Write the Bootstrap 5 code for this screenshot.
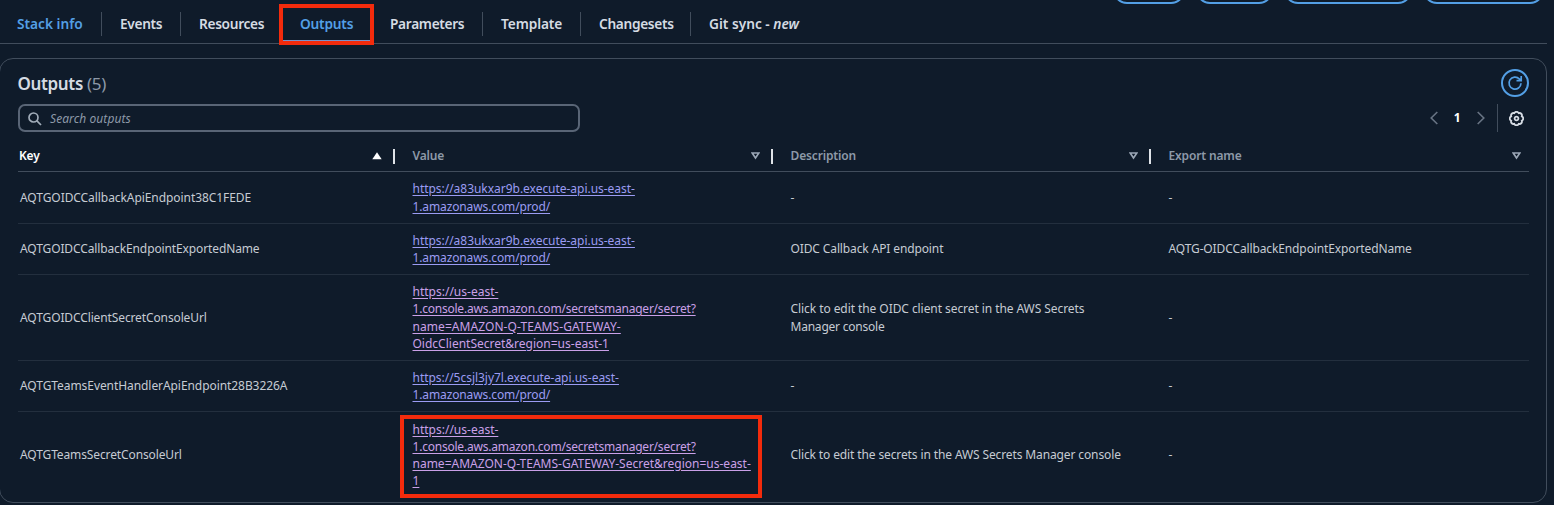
<!DOCTYPE html>
<html lang="en" data-bs-theme="dark">
<head>
<meta charset="utf-8">
<meta name="viewport" content="width=device-width, initial-scale=1">
<title>Outputs</title>
<link href="https://cdn.jsdelivr.net/npm/bootstrap@5.3.0/dist/css/bootstrap.min.css" rel="stylesheet">
<style>
:root{--page:#0f1b2a;--line:#414d5c;--accent:#539fe5;--txt:#c6cbd3;--red:#f32b0c}
body{background:var(--page);color:var(--txt);font-family:"Noto Sans","Open Sans",sans-serif;font-size:12px;line-height:17.15px;width:1554px;height:505px;overflow:hidden}
.stage{width:1547px;height:505px}
.actions{right:3px;top:-24px;gap:11px}
.actions .btn{height:28px;border:2px solid var(--accent);border-radius:14px;padding:0}
.tabs{height:44px;border-bottom:1px solid var(--line)}
.tabs .nav-link{padding:0 0 0 18px;color:#d5dbe3;font-weight:600;font-size:13.7px;letter-spacing:-.32px;line-height:24px;height:24px;margin-top:12px;border-left:1px solid var(--line);white-space:nowrap}
.tabs .nav-item:first-child .nav-link{padding-left:17px;border-left:0;letter-spacing:0}
.tabs .nav-link.active,.tabs .hot{color:var(--accent)}
.tabs .nav-link.active{padding-left:19px;letter-spacing:-.2px}
.mark-tab{left:-1px;top:4px;width:95px;height:41px;border:4px solid var(--red)}
.mark-tab::after{content:"";display:block;height:1px;background:#7b91c8;margin-top:32px}
.panel{margin-top:14px;margin-left:-1px;width:1548px;height:445px;border:1px solid var(--line);border-radius:14px;padding:9px 17px 0 17.5px}
.panel h2{font-size:17px;font-weight:600;line-height:32px;letter-spacing:-.35px;color:#d5dbe3}
.panel h2 span{font-weight:400;color:#8d99a8}
.reload{width:28px;height:28px;border:2px solid var(--accent);color:var(--accent);border-radius:50%;margin-top:1px}
.search{width:562.5px;height:28px;border:2px solid #596576;border-radius:7px;padding:1px 9px 0 8px;color:#8d99a8;font-style:italic}
.ph{margin-left:8.5px;letter-spacing:.08px}
.tools{height:28px}
.pg{width:39.5px}
.divider{width:1px;height:28px;background:var(--line);margin:0 11px 0 12px}
.gear{margin-right:5px}
.outputs{table-layout:fixed;width:1511px;margin-top:9px;border-collapse:separate;border-spacing:0}
.outputs th{height:31px;padding:0 0 0 18px;font-weight:600;letter-spacing:-.15px;color:#8d99a8;border-bottom:1px solid var(--line)}
.outputs td{padding:0 8px 0 18px;border-bottom:1px solid #232f3e;vertical-align:middle;letter-spacing:-.12px}
.outputs th:first-child{padding-left:1.5px}
.outputs td:first-child{padding-left:2.5px}
.outputs tr:last-child td{border-bottom:0}
.head-in{height:15px;padding-right:11px;border-right:2px solid #dfe3e8}
.outputs th:last-child .head-in{border:0;padding-right:8px}
.outputs a{color:#9b9bf3;text-underline-offset:1.5px;letter-spacing:-.03px;white-space:nowrap}
.outputs a.seen{color:#caa0e8;letter-spacing:0}
.outputs .tight{letter-spacing:-.22px}
.outputs .snug{letter-spacing:-.07px}
.outputs .wide{letter-spacing:.06px}
.mark-cell{left:5.5px;top:3px;width:362px;height:83px;border:4px solid var(--red)}
</style>
</head>
<body>
<div class="stage position-relative">
  <div class="actions position-absolute d-flex">
    <span class="btn" style="width:72px"></span><span class="btn" style="width:77px"></span><span class="btn" style="width:128px"></span><span class="btn" style="width:121px"></span>
  </div>
  <ul class="tabs nav flex-nowrap">
    <li class="nav-item" style="width:101px"><a class="nav-link hot">Stack info</a></li>
    <li class="nav-item" style="width:79px"><a class="nav-link">Events</a></li>
    <li class="nav-item" style="width:100px"><a class="nav-link">Resources</a></li>
    <li class="nav-item position-relative" style="width:91px"><a class="nav-link active">Outputs</a><span class="mark-tab position-absolute"></span></li>
    <li class="nav-item" style="width:111px"><a class="nav-link">Parameters</a></li>
    <li class="nav-item" style="width:98px"><a class="nav-link" style="letter-spacing:-.1px">Template</a></li>
    <li class="nav-item" style="width:110px"><a class="nav-link">Changesets</a></li>
    <li class="nav-item"><a class="nav-link" style="letter-spacing:0">Git sync - <i>new</i></a></li>
  </ul>
  <section class="panel">
    <div class="d-flex justify-content-between" style="height:36px">
      <h2 class="m-0">Outputs <span>(5)</span></h2>
      <span class="reload d-flex align-items-center justify-content-center">
        <svg width="16" height="16" viewBox="0 0 16 16" fill="none" stroke="currentColor" stroke-width="1.7"><path d="M14 8.3A6 6 0 1 1 12.4 4L14 5.4M14.2 1v4.7H9.5"/></svg>
      </span>
    </div>
    <div class="d-flex justify-content-between">
      <div class="search d-flex align-items-center">
        <svg width="14" height="14" viewBox="0 0 14 14" fill="none" stroke="#a2adba" stroke-width="1.7"><circle cx="5.5" cy="5.5" r="4.5"/><path d="M8.7 8.7 13 13"/></svg>
        <span class="ph">Search outputs</span>
      </div>
      <div class="tools d-flex align-items-center">
        <svg width="8" height="14" viewBox="0 0 8 14" fill="none" stroke="#687484" stroke-width="1.6"><path d="M7.3 1 1.2 7l6.1 6"/></svg>
        <b class="pg text-white text-center">1</b>
        <svg width="8" height="14" viewBox="0 0 8 14" fill="none" stroke="#687484" stroke-width="1.6"><path d="M.7 1l6.1 6-6.1 6"/></svg>
        <span class="divider"></span>
        <svg class="gear" width="15" height="15" viewBox="-7.5 -7.5 15 15" fill="none" stroke="#d5dbe3" stroke-width="1.8"><path d="M-2.2-5.3A2.4 2.4 0 0 1 2.2-5.3A2.4 2.4 0 0 1 5.3-2.2A2.4 2.4 0 0 1 5.3 2.2A2.4 2.4 0 0 1 2.2 5.3A2.4 2.4 0 0 1-2.2 5.3A2.4 2.4 0 0 1-5.3 2.2A2.4 2.4 0 0 1-5.3-2.2A2.4 2.4 0 0 1-2.2-5.3Z"/><circle r="1.9"/></svg>
      </div>
    </div>
    <table class="outputs">
      <colgroup><col style="width:377px"><col style="width:378px"><col style="width:378px"><col style="width:378px"></colgroup>
      <thead><tr>
        <th class="text-white"><div class="head-in d-flex align-items-center justify-content-between"><span>Key</span><svg width="10" height="8"><path fill="#fff" d="M5 .3 9.7 7.3H.3z"/></svg></div></th>
        <th><div class="head-in d-flex align-items-center justify-content-between"><span>Value</span><svg width="9" height="8" fill="none" stroke="#9ba7b6" stroke-width="1.6"><path d="M1.2 1h6.6L4.5 6z"/></svg></div></th>
        <th><div class="head-in d-flex align-items-center justify-content-between"><span>Description</span><svg width="9" height="8" fill="none" stroke="#9ba7b6" stroke-width="1.6"><path d="M1.2 1h6.6L4.5 6z"/></svg></div></th>
        <th><div class="head-in d-flex align-items-center justify-content-between"><span>Export name</span><svg width="9" height="8" fill="none" stroke="#9ba7b6" stroke-width="1.6"><path d="M1.2 1h6.6L4.5 6z"/></svg></div></th>
      </tr></thead>
      <tbody>
        <tr style="height:52px"><td class="snug">AQTGOIDCCallbackApiEndpoint38C1FEDE</td><td><a href="#">https://a83ukxar9b.execute-api.us-east-<br><span style="letter-spacing:-.12px">1.amazonaws.com/prod/</span></a></td><td>-</td><td>-</td></tr>
        <tr style="height:51px"><td>AQTGOIDCCallbackEndpointExportedName</td><td><a href="#">https://a83ukxar9b.execute-api.us-east-<br><span style="letter-spacing:-.12px">1.amazonaws.com/prod/</span></a></td><td>OIDC Callback API endpoint</td><td>AQTG-OIDCCallbackEndpointExportedName</td></tr>
        <tr style="height:86px"><td>AQTGOIDCClientSecretConsoleUrl</td><td><a class="seen" href="#">https://us-east-<br><span class="tight">1.console.aws.amazon.com/secretsmanager/secret?</span><br><span class="wide">name=AMAZON-Q-TEAMS-GATEWAY-</span><br>OidcClientSecret&amp;region=us-east-1</a></td><td class="snug">Click to edit the OIDC client secret in the AWS Secrets<br><span class="tight">Manager console</span></td><td>-</td></tr>
        <tr style="height:51px"><td class="snug">AQTGTeamsEventHandlerApiEndpoint28B3226A</td><td><a href="#">https://5csjl3jy7l.execute-api.us-east-<br><span style="letter-spacing:-.12px">1.amazonaws.com/prod/</span></a></td><td>-</td><td>-</td></tr>
        <tr style="height:86px"><td>AQTGTeamsSecretConsoleUrl</td><td class="position-relative"><a class="seen" href="#">https://us-east-<br><span class="tight">1.console.aws.amazon.com/secretsmanager/secret?</span><br>name=AMAZON-Q-TEAMS-GATEWAY-Secret&amp;region=us-east-<br>1</a><span class="mark-cell position-absolute"></span></td><td>Click to edit the secrets in the AWS Secrets Manager console</td><td>-</td></tr>
      </tbody>
    </table>
  </section>
</div>
<script src="https://cdn.jsdelivr.net/npm/bootstrap@5.3.0/dist/js/bootstrap.bundle.min.js"></script>
</body>
</html>
